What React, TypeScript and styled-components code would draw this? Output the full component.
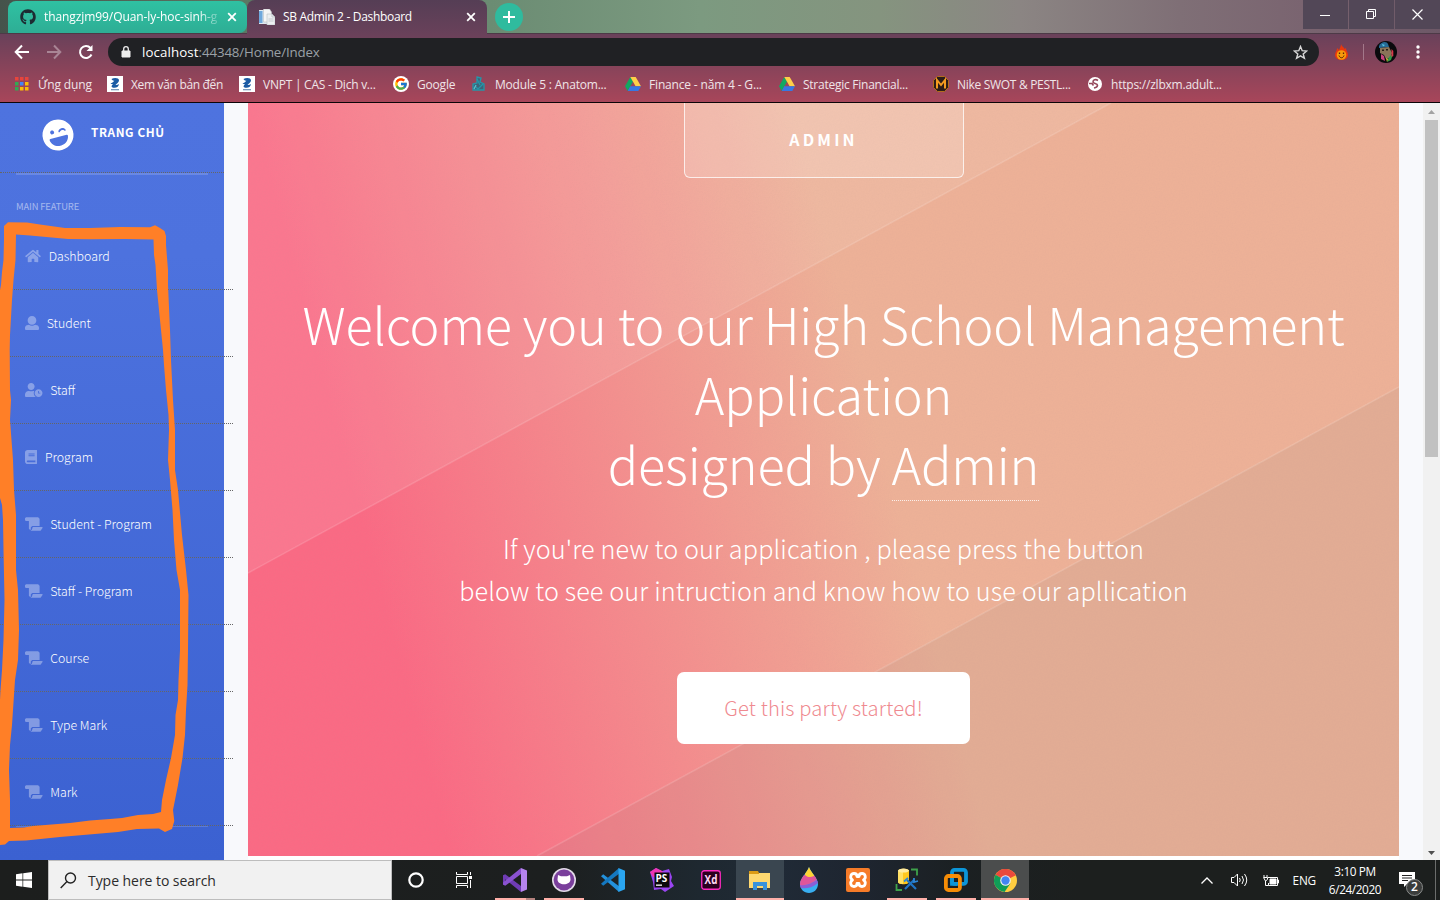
import React from "react";
import styled, { createGlobalStyle } from "styled-components";
import { FaGithub, FaHome, FaUserClock, FaBook, FaLaughWink } from "react-icons/fa";
import { FcGoogle } from "react-icons/fc";

const UI = `"Open Sans", "Noto Sans", sans-serif`;
const WEB = `"Noto Sans CJK JP", "Noto Sans CJK SC", "Noto Sans", sans-serif`;

const Global = createGlobalStyle`
  *, *::before, *::after { box-sizing: border-box; }
  body { margin: 0; overflow: hidden; background: #fff; }
  svg { display: block; flex: none; }
`;

const Screen = styled.div`
  width: 1440px;
  height: 900px;
  display: flex;
  flex-direction: column;
  overflow: hidden;
  font-family: ${UI};
`;

const Label = styled.span<{ $size?: number; $ls?: number; $color?: string }>`
  font-size: ${(p) => p.$size ?? 12}px;
  letter-spacing: ${(p) => p.$ls ?? 0}px;
  color: ${(p) => p.$color ?? "#fff"};
  white-space: nowrap;
`;

/* ---------- Browser chrome ---------- */

const Chrome = styled.header`
  height: 103px;
  flex: none;
  display: flex;
  flex-direction: column;
  background: linear-gradient(#553e55 0, #69415a 34px, #a8465a 102px);
  border-bottom: 1px solid #0b0508;
`;

const TabStrip = styled.div`
  height: 34px;
  display: flex;
  align-items: flex-start;
  background: linear-gradient(90deg, #45534b 0, #5b7763 247px, #6b8c73 490px, #7c9a80 700px, #85947f 880px, #8b8583 1020px, #7f6f76 1180px, #7a6470 1303px, #6d5867 1440px);
  border-bottom: 1px solid #4d3a47;
`;

const Tab = styled.div<{ $active?: boolean }>`
  height: ${(p) => (p.$active ? 34 : 32)}px;
  margin-top: ${(p) => (p.$active ? 0 : 1)}px;
  width: ${(p) => (p.$active ? 240 : 239)}px;
  margin-left: ${(p) => (p.$active ? 0 : 8)}px;
  padding: 0 ${(p) => (p.$active ? 11 : 10)}px 0 12px;
  display: flex;
  align-items: center;
  border-radius: ${(p) => (p.$active ? "8px 8px 0 0" : "8px 8px 8px 0")};
  background: ${(p) => (p.$active ? "linear-gradient(#553e55, #69415a)" : "linear-gradient(#2fc1a2, #2eae95)")};
`;

const TabTitle = styled(Label)<{ $fade?: boolean }>`
  flex: 1;
  margin: 0 8px;
  padding-bottom: 1px;
  ${(p) => p.$fade && "mask-image: linear-gradient(90deg, #000 88%, rgba(0, 0, 0, 0.2));"}
`;

const NewTab = styled.div`
  width: 28px;
  height: 28px;
  margin: 3px 0 0 8px;
  border-radius: 50%;
  background: #2fbb9e;
  display: grid;
  place-items: center;
`;

const WindowControls = styled.div`
  margin-left: auto;
  display: flex;
  gap: 1px;
`;

const WindowButton = styled.div`
  width: 45px;
  height: 29px;
  background: #524757;
  display: grid;
  place-items: center;
`;

const Toolbar = styled.div`
  height: 36px;
  display: flex;
  align-items: center;
  padding-left: 14px;
`;

const NavIcons = styled.div`
  width: 94px;
  display: flex;
  gap: 16px;
`;

const AddressBar = styled.div`
  width: 1211px;
  height: 28px;
  border-radius: 14px;
  background: #202124;
  display: flex;
  align-items: center;
  padding: 0 11px 0 13px;
`;

const Url = styled(Label)`
  flex: 1;
  margin-left: 11px;
`;

const HostText = styled.span`
  letter-spacing: 0.1px;
  color: #fff;
`;

const ExtensionSlot = styled.span`
  margin-left: 16px;
`;

const ToolbarRule = styled.div`
  width: 1px;
  height: 16px;
  margin: 0 11px 0 15px;
  background: #a3788a;
`;

const Avatar = styled.div`
  width: 22px;
  height: 22px;
  border-radius: 50%;
  overflow: hidden;
  margin-right: 17px;
`;

const Bookmarks = styled.nav`
  height: 28px;
  display: flex;
  align-items: center;
  padding-left: 14px;
`;

const Bookmark = styled.div<{ $w: number }>`
  width: ${(p) => p.$w}px;
  display: flex;
  align-items: center;
  gap: 8px;
`;

const Disc = styled.span<{ $on?: boolean }>`
  width: 16px;
  height: 16px;
  display: grid;
  place-items: center;
  ${(p) => p.$on && "background: #fff; border-radius: 50%; svg { width: 14px; height: 14px; }"}
`;

/* ---------- Page ---------- */

const Page = styled.div`
  height: 757px;
  flex: none;
  display: flex;
  background: #f8f9fc;
`;

const Sidebar = styled.aside`
  position: relative;
  width: 224px;
  height: 757px;
  background: linear-gradient(#4e73df 0, #4d72de 20%, #3b61d1 100%);
  font-family: ${WEB};
`;

const Brand = styled.div`
  height: 70px;
  padding: 0 0 5px 42px;
  display: flex;
  align-items: center;
  gap: 17px;
  border-bottom: 1px dotted #666;
  svg { transform: rotate(-15deg); }
`;

const BrandText = styled(Label)`
  font-weight: 700;
  padding-bottom: 8px;
`;

const Divider = styled.div<{ $h: number }>`
  height: ${(p) => p.$h}px;
  margin: 0 16px;
  background: rgba(255, 255, 255, 0.16);
`;

const SectionTitle = styled.div`
  height: 48px;
  padding: 24px 16px 0;
  font-size: 9.4px;
  line-height: 14px;
  letter-spacing: -0.13px;
  color: rgba(255, 255, 255, 0.5);
`;

const NavItem = styled.div`
  width: 233px;
  height: 67px;
  padding: 0 0 1px 25px;
  display: flex;
  align-items: center;
  gap: 7.7px;
  border-bottom: 1px dotted #666;
  svg { color: rgba(255, 255, 255, 0.35); }
`;

const NavGlyph = styled.span<{ $w: number }>`
  display: flex;
  svg { width: ${(p) => p.$w}px; height: 14px; }
`;

const NavText = styled(Label)`
  font-weight: 300;
`;

const Marker = styled.svg`
  position: absolute;
  left: 0;
  top: 117px;
  z-index: 2;
`;

const Main = styled.main`
  flex: 1;
  padding-left: 24px;
  display: flex;
`;

const HeroColumn = styled.div`
  width: 1151px;
  height: 757px;
  background: #fff;
`;

const Hero = styled.section`
  position: relative;
  width: 1151px;
  height: 753px;
  overflow: hidden;
  display: flex;
  flex-direction: column;
  align-items: center;
  text-align: center;
  font-family: ${WEB};
  font-weight: 200;
  color: #fff;
  background: linear-gradient(75deg, #fa6a84 15%, #edb197 55%);
  > * { position: relative; }
`;

const HeroShade = styled.svg`
  && { position: absolute; inset: 0; }
`;

const AdminBox = styled.div`
  width: 280px;
  height: 75px;
  flex: none;
  border: 1px solid rgba(255, 255, 255, 0.75);
  border-top: 0;
  border-radius: 0 0 6px 6px;
  background: rgba(255, 255, 255, 0.17);
  display: flex;
  justify-content: center;
  align-items: center;
  padding-bottom: 2px;
  font-weight: 700;
  font-size: 16px;
  letter-spacing: 3.2px;
`;

const Heading = styled.h1`
  margin: 111px 0 0;
  font-size: 50.4px;
  line-height: 70px;
  letter-spacing: -0.14px;
  font-weight: 200;
  white-space: nowrap;
`;

const HeadingLink = styled.span`
  display: inline-block;
  height: 72px;
  border-bottom: 1px dotted rgba(255, 255, 255, 0.8);
`;

const Lead = styled.p`
  margin: 26px 0 0;
  font-size: 25.2px;
  line-height: 42px;
  letter-spacing: 0.125px;
  font-weight: 200;
  white-space: nowrap;
`;

const StartButton = styled.div`
  width: 293px;
  height: 72px;
  margin-top: 61px;
  padding-bottom: 2px;
  border-radius: 7px;
  background: #fff;
  color: #ef8a90;
  font-size: 20.2px;
  letter-spacing: 0.17px;
  font-weight: 300;
  display: grid;
  place-items: center;
`;

const Scrollbar = styled.div`
  width: 17px;
  margin-left: auto;
  background: #f1f1f1;
  display: flex;
  flex-direction: column;
  align-items: center;
  padding: 7px 0 5px;
`;

const Thumb = styled.div`
  width: 13px;
  height: 337px;
  margin: 6px 0 auto;
  background: #c1c1c1;
`;

/* ---------- Taskbar ---------- */

const Taskbar = styled.footer`
  height: 40px;
  flex: none;
  display: flex;
  background: linear-gradient(90deg, #1c1e1d 0, #1c1f1f 560px, #1e2830 700px, #202a36 780px, #1e2530 860px, #1b2022 960px, #1c1f1e 1080px);
`;

const underline = {
  none: "transparent",
  mid: "#ffb0a9",
  full: "#ffb0a9",
  stacked: "linear-gradient(90deg, #ffb0a9 31px, #b5827e 31px)",
};

const TaskCell = styled.div<{ $hot?: string; $line?: keyof typeof underline }>`
  position: relative;
  width: 48px;
  height: 40px;
  margin-right: 1px;
  display: grid;
  place-items: center;
  background: ${(p) => p.$hot ?? "transparent"};
  &::after {
    content: "";
    position: absolute;
    bottom: 0;
    left: ${(p) => (p.$line === "full" ? 0 : 4)}px;
    right: ${(p) => (p.$line === "full" ? 0 : 4)}px;
    height: 2px;
    background: ${(p) => underline[p.$line ?? "none"]};
  }
`;

const Search = styled.div`
  width: 344px;
  height: 40px;
  border: 1px solid #bdbdbd;
  background: #f1f1f1;
  display: flex;
  align-items: center;
  padding-left: 11px;
  gap: 11px;
`;

const StartCell = styled(TaskCell)`
  margin-right: 0;
`;

const TaskList = styled.div`
  display: flex;
  margin-left: 3px;
`;

const Tray = styled.div`
  margin-left: auto;
  display: flex;
  align-items: center;
  height: 40px;
`;

const TrayIcon = styled.span<{ $mr: number }>`
  margin-right: ${(p) => p.$mr}px;
`;

const Clock = styled.div`
  width: 56px;
  margin: 0 16px 1px 11px;
  display: flex;
  flex-direction: column;
  align-items: center;
  line-height: 18px;
`;

const Notifications = styled.div`
  position: relative;
  width: 37px;
  height: 40px;
  padding-top: 12px;
  border-right: 1px solid #6b6d6c;
  margin-right: 4px;
`;

const Badge = styled.span`
  position: absolute;
  left: 7px;
  top: 19px;
  width: 17px;
  height: 17px;
  border-radius: 50%;
  border: 1px solid #8a8c8b;
  background: #3b3d3c;
  color: #fff;
  font-size: 12px;
  font-weight: 600;
  line-height: 14px;
  text-align: center;
`;

/* ---------- Drawings ---------- */

const CloseX = () => (
  <svg width="10" height="10" viewBox="0 0 10 10" stroke="#fff" strokeWidth="1.8"><path d="M1.200 1.200l7.600 7.600M8.800 1.200L1.200 8.800" /></svg>
);

const Docs = () => (
  <svg width="16" height="16" viewBox="0 0 16 16">
    <rect x="0" y="1" width="11" height="14" fill="#dfe9f1" /><rect x="0" y="2" width="3.5" height="12" fill="#6fa8dc" />
    <path d="M4.500 0h6l2 3v10h-8z" fill="#f5f5f5" stroke="#b8bfc4" strokeWidth=".6" />
    <path d="M8 5h5l3 3v8H8z" fill="#eceff1" stroke="#b8bfc4" strokeWidth=".6" /><path d="M13 5v3h3M9.500 10h5M9.500 12h5" stroke="#b4bcc0" strokeWidth=".7" fill="none" />
  </svg>
);

const Apps = () => (
  <svg width="14" height="14" viewBox="0 0 14 14">
    {["#e8453c", "#e8453c", "#e8453c", "#34a853", "#4285f4", "#fbbc05", "#34a853", "#fbbc05", "#fbbc05"].map((c, i) => (
      <rect key={i} x={(i % 3) * 5} y={Math.floor(i / 3) * 5} width="3.500" height="3.500" fill={c} />
    ))}
  </svg>
);

const Vnpt = () => (
  <svg width="16" height="16" viewBox="0 0 16 16">
    <rect width="16" height="16" fill="#fff" />
    <path d="M4.500 3C7 1.500 12 1.500 12 4.500c0 2-2.500 3-3.500 4.500 1.300.2 2.500-.3 3.500-1-.5 2.800-2.500 4-5 3.800C4 11.500 4 10 6 8c-1 .2-1.800 0-2.500-.5C5 7 7 5.500 7.500 4.500 6.500 5 5.300 4.500 4.500 3z" fill="#1b5ba4" />
    <path d="M4 13.700h8" stroke="#6d8fb5" strokeWidth="1.200" />
  </svg>
);

const Drive = () => (
  <svg width="16" height="14" viewBox="0 0 16 14">
    <path d="M5.300 0L0 9.300 2.700 14 8 4.600z" fill="#11a861" /><path d="M5.300 0h5.400L16 9.300h-5.400z" fill="#ffcf48" /><path d="M5.300 9.300H16L13.300 14H2.700z" fill="#3777e3" />
  </svg>
);

const Module = () => (
  <svg width="16" height="16" viewBox="0 0 16 16" fill="none" stroke="#2596a8" strokeWidth="1.300">
    <path d="M6 1l4 1-1 4 4 2v6H2V8l4-1z" fill="#3d6479" /><path d="M4 10l3 3 5-5M6 3l3 6" /><path d="M3 13l2-4" stroke="#57c3d0" />
  </svg>
);

const Medal = () => (
  <svg width="16" height="16" viewBox="0 0 16 16">
    <path d="M4.500.5h7L15.500 4.500v7L11.500 15.500h-7L.5 11.500v-7z" fill="#2c1d18" stroke="#b26c1d" />
    <path d="M4 12.500V4l4 5 4-5v8.500" fill="none" stroke="#f49b20" strokeWidth="2" />
  </svg>
);

const Globe = () => (
  <svg width="14" height="14" viewBox="0 0 14 14">
    <circle cx="7" cy="7" r="7" fill="#fff" />
    <path d="M10 3.500C7.500 1.800 5 3 5 5c0 1.800 4.500 1 4.500 3.200 0 1.500-1.500 2.300-3.500 2.800M1 6.500h3l1.500 2" fill="none" stroke="#96485b" strokeWidth="1.600" />
  </svg>
);

const Flame = () => (
  <svg width="13" height="16" viewBox="0 0 13 16">
    <path d="M6 0c1 3 3 3 3.500 5L11 4c0 3 2 4 2 7 0 3-3 5-6.500 5S0 14 0 11c0-3 2-4 2-7l2 2c1-2 2-4 2-6z" fill="#e8380d" />
    <circle cx="6.500" cy="11" r="4.800" fill="#f79a0b" /><path d="M4 11.500c1 3 4 3 5 0" stroke="#5a2205" fill="none" /><path d="M4.500 8.500v1.500M8.500 8.500v1.500" stroke="#5a2205" strokeWidth="1.300" />
  </svg>
);

const AvatarArt = () => (
  <svg width="22" height="22" viewBox="0 0 22 22">
    <rect width="22" height="22" fill="#0b0a0d" /><path d="M4 5c2-5 8-5 9-2l1 3-10 1z" fill="#276a96" /><path d="M7 3l3 1-2 1.500z" fill="#57c9e6" />
    <path d="M5 7l9-1 3 6-2 5-4 1-2-4-4-2z" fill="#8a7458" /><path d="M7 8.500h2V10H7zM11 8h2v1.500h-2z" fill="#2b1f19" /><path d="M6 13l3 2 1 5-4-2z" fill="#c9427d" />
    <path d="M14 16l4-3-2 6-4 2z" fill="#2e9a48" /><path d="M16.500 8l1.800 2v5l-1.800 1z" fill="#d83a4a" /><path d="M11 17l2 1-1 3z" fill="#e7c83a" />
  </svg>
);

const UserIcon = () => (
  <svg width="14" height="14" viewBox="0 0 512 512" fill="currentColor">
    <path d="M256 0c88.366 0 160 71.634 160 160S344.366 320 256 320 96 248.366 96 160 167.634 0 256 0zm183.283 333.821l-71.313-17.828c-74.923 53.890-165.738 41.864-223.940 0l-71.313 17.828C29.981 344.505 0 382.903 0 426.955V464c0 26.510 21.490 48 48 48h416c26.510 0 48-21.490 48-48v-37.045c0-44.052-29.981-82.450-72.717-93.134z" />
  </svg>
);

const ScrollIcon = () => (
  <svg width="18" height="14" viewBox="0 0 18 14" fill="currentColor">
    <path d="M1 0h12.500L15 1.500V9H7.500L6 10.300V13H5L4 11.800V4H.7L0 3V1z" /><path d="M8 10h10v1.200L16 14H5.500l1.500-1z" />
  </svg>
);

const VisualStudio = () => (
  <svg width="24" height="24" viewBox="0 0 24 24">
    <path d="M0 7.200L2.200 6.200 18 18v6L0 9.500zM0 7.200h2.200v10L0 16.500z" fill="#6f3cb4" />
    <path d="M0 16.500l2.200 1.200L18 6V0L0 14.500z" fill="#8a52d0" /><path d="M18 0l6 2.600v18.800L18 24z" fill="#b583ee" />
  </svg>
);

const GithubDesktop = () => (
  <svg width="24" height="24" viewBox="0 0 24 24">
    <circle cx="12" cy="12" r="12" fill="#e3dbe8" /><circle cx="12" cy="12" r="10.400" fill="#7a3f9c" />
    <path d="M6 7l3 1.200h6L18 7l.5 4.500c0 6.300-13 6.300-13 0z" fill="#fff" />
  </svg>
);

const VsCode = () => (
  <svg width="24" height="24" viewBox="0 0 24 24">
    <path d="M0 8.200l2.200-2L18 18.300V24z" fill="#2391dc" /><path d="M0 15.800l2.200 2L18 5.700V0z" fill="#1478c0" /><path d="M17.500 0L24 2.800v18.400L17.500 24z" fill="#2aa5f0" />
  </svg>
);

const PhpStorm = () => (
  <svg width="24" height="24" viewBox="0 0 24 24">
    <path d="M0 4l6-4 6 3 7-2 3 8-1 4 3 5-9 6-4-3-7 1-1-8z" fill="#9a45f2" /><path d="M0 4l6-4 6 3 3 6H3z" fill="#ee35b4" />
    <rect x="4.500" y="4.500" width="15" height="15" fill="#0a0a0a" /><rect x="6" y="16.500" width="6" height="1.300" fill="#fff" />
    <text x="5.500" y="13.500" fontFamily="Open Sans" fontWeight="700" fontSize="10" fill="#fff">PS</text>
  </svg>
);

const Xd = () => (
  <svg width="20" height="20" viewBox="0 0 20 20">
    <rect x=".75" y=".75" width="18.500" height="18.500" rx="2.500" fill="#2b001e" stroke="#ff2bc2" strokeWidth="1.300" />
    <text x="3.600" y="14.300" fontFamily="Open Sans" fontWeight="700" fontSize="12" textLength="12.800" lengthAdjust="spacingAndGlyphs" fill="#ffd9f4">Xd</text>
  </svg>
);

const Explorer = () => (
  <svg width="22" height="20" viewBox="0 0 22 20">
    <path d="M0 3h21v15H0z" fill="#ffd970" /><path d="M0 4V1h9l1 2v1z" fill="#dd9c15" /><path d="M4 20v-8h14v8h-4v-4H8v4z" fill="#3a93dc" />
  </svg>
);

const Drop = () => (
  <svg width="18" height="26" viewBox="0 0 18 26">
    <defs><clipPath id="drop"><path d="M9 0c2 6 9 11 9 17 0 5-4 9-9 9s-9-4-9-9C0 11 7 6 9 0z" /></clipPath></defs>
    <g clipPath="url(#drop)"><rect width="18" height="26" fill="#38aef0" /><path d="M0 17c6 2 12-1 18-5v4c-6 5-12 6-18 5z" fill="#8b5ed6" /><path d="M0 18V8h18v4c-6 4-12 7-18 6z" fill="#e0559a" /><path d="M4 0h10v9c-4 2-7 1-9-1z" fill="#ffd335" /></g>
  </svg>
);

const Xampp = () => (
  <svg width="24" height="24" viewBox="0 0 24 24">
    <rect width="24" height="24" rx="2" fill="#f67b28" />
    <path
      d="M8 5.500C10 5.500 11 6.800 11 8.500H13C13 6.800 14 5.500 16 5.500 19.500 5.500 20.500 10 17.500 12 20.500 14 19.500 18.500 16 18.500 14 18.500 13 17.200 13 15.500H11C11 17.200 10 18.500 8 18.500 4.500 18.500 3.500 14 6.500 12 3.500 10 4.500 5.500 8 5.500z"
      fill="none" stroke="#fff" strokeWidth="2.800" strokeLinejoin="round"
    />
  </svg>
);

const Ssms = () => (
  <svg width="24" height="24" viewBox="0 0 24 24">
    <path d="M3 3c0-3 11-3 11 0v11c0 3-11 3-11 0z" fill="#ffc81e" /><path d="M3 3h5v13c-3 0-5-1-5-2z" fill="#ffe063" /><ellipse cx="8.500" cy="2.600" rx="5.500" ry="2" fill="#ffeca0" />
    <path d="M16 1.500h6v6M1.500 16v6H7" stroke="#3fa24b" strokeWidth="1.800" fill="none" /><path d="M10 21l9-9M12 12l9 9" stroke="#1f74c4" strokeWidth="2.200" />
    <path d="M9 13.500l4-3.500M19 10v4l4-1" stroke="#2d86d6" strokeWidth="1.800" fill="none" />
  </svg>
);

const Vmware = () => (
  <svg width="24" height="24" viewBox="0 0 24 24" fill="none" strokeWidth="3.800">
    <rect x="8" y="1.900" width="14" height="14" rx="2.500" stroke="#0c95d8" /><rect x="1.900" y="8" width="14" height="14" rx="2.500" stroke="#f78d06" /><path d="M8 10v5.900h5" stroke="#0c95d8" />
  </svg>
);

const ChromeLogo = () => (
  <svg width="23" height="23" viewBox="0 0 48 48">
    <circle cx="24" cy="24" r="24" fill="#ffcd40" /><path d="M24 24L3.200 12A24 24 0 0 1 45.500 13z" fill="#ea4a3d" /><path d="M3.200 12A24 24 0 0 0 22 48l12-18-10-6z" fill="#109d58" />
    <path d="M24 13h21.500L42 12H24z" fill="#ea4a3d" /><circle cx="24" cy="24" r="11" fill="#f1f1f1" /><circle cx="24" cy="24" r="8.700" fill="#4285f4" />
  </svg>
);

const markerPath =
  "M4 226L8 222.300 27 222.600 40 224.500 65 228 90 228 120 227 150 227.300 155 225.200 160 228 164.500 231 166 236 166 245 168 270 168 285 170 330 171 360 173 400 175 430 175 470 178 490 182 535 186 570 188.500 595 188 650 187.500 685 186 710 185 735 182.500 758 178 785 173 810 174.300 821 172 829 165 832 159 828.600 137 829 118 832 60 837 26 840.500 9 841 5 844.500 0 845V290L1 285 2 272 3.500 260 4 240z" +
  "M10 828L24 827.500 33 826 70 823 90 820.500 110 819 122 818 138 815 153 814 161 812 162 800 166 780 171 758 175 735 175.500 715 178 700 178.500 680 180 650 180 610 180 590 176.500 570 174 540 172.500 510 170 480 168 460 169 430 168.500 415 166 390 164 365 163 350 159 310 157 290 155.500 265 154 255 153.500 239.500 125 239 90 239.300 68 239 30 235.500 16 234.500 15.500 260 13.500 280 12 300 10 335 9.700 350 10 390 11 400 10 420 11.500 440 13 460 14 490 16 515 16 570 18 590 19 630 18 660 15 680 13 710 12 725 10 745 9 770 10 800z" +
  "M0 498L2 505 3 520 3.500 550 4.500 600 3.500 640 2 670 .5 690 0 700z";

/* ---------- Content ---------- */

const bookmarks = [
  { w: 93, icon: <Apps />, text: "Ứng dụng", ls: -0.1 },
  { w: 132, icon: <Vnpt />, text: "Xem văn bản đến", ls: -0.33 },
  { w: 154, icon: <Vnpt />, text: "VNPT | CAS - Dịch v...", ls: -0.25 },
  { w: 78, icon: <FcGoogle size={16} />, text: "Google", ls: -0.2, disc: true },
  { w: 154, icon: <Module />, text: "Module 5 : Anatom...", ls: -0.2 },
  { w: 154, icon: <Drive />, text: "Finance - năm 4 - G...", ls: -0.17 },
  { w: 154, icon: <Drive />, text: "Strategic Financial...", ls: -0.25 },
  { w: 154, icon: <Medal />, text: "Nike SWOT & PESTL...", ls: -0.3 },
  { w: 150, icon: <Globe />, text: "https://zlbxm.adult...", ls: -0.22 },
];

const navItems = [
  { w: 16, icon: <FaHome />, text: "Dashboard" },
  { w: 14, icon: <UserIcon />, text: "Student" },
  { w: 17.5, icon: <FaUserClock />, text: "Staff" },
  { w: 12.25, icon: <FaBook />, text: "Program" },
  { w: 17.5, icon: <ScrollIcon />, text: "Student - Program" },
  { w: 17.5, icon: <ScrollIcon />, text: "Staff - Program" },
  { w: 17.5, icon: <ScrollIcon />, text: "Course" },
  { w: 17.5, icon: <ScrollIcon />, text: "Type Mark" },
  { w: 17.5, icon: <ScrollIcon />, text: "Mark" },
];

const tasks: { icon: React.ReactNode; hot?: string; line?: keyof typeof underline }[] = [
  { icon: <VisualStudio />, line: "stacked" },
  { icon: <GithubDesktop />, line: "mid" },
  { icon: <VsCode /> },
  { icon: <PhpStorm /> },
  { icon: <Xd /> },
  { icon: <Explorer />, hot: "#3a4650", line: "full" },
  { icon: <Drop /> },
  { icon: <Xampp /> },
  { icon: <Ssms />, line: "mid" },
  { icon: <Vmware />, line: "mid" },
  { icon: <ChromeLogo />, hot: "#4b4d4d", line: "full" },
];

export default function App() {
  return (
    <Screen>
      <Global />
      <Chrome>
        <TabStrip>
          <Tab>
            <FaGithub size={16} color="#1d2b33" />
            <TabTitle $fade $ls={-0.08}>thangzjm99/Quan-ly-hoc-sinh-g</TabTitle>
            <CloseX />
          </Tab>
          <Tab $active>
            <Docs />
            <TabTitle $ls={-0.32}>SB Admin 2 - Dashboard</TabTitle>
            <CloseX />
          </Tab>
          <NewTab>
            <svg width="12" height="12" viewBox="0 0 12 12" stroke="#fff" strokeWidth="2"><path d="M6 0v12M0 6h12" /></svg>
          </NewTab>
          <WindowControls>
            <WindowButton><svg width="12" height="10" stroke="#fff"><path d="M0 5.500h10" /></svg></WindowButton>
            <WindowButton>
              <svg width="11" height="11" stroke="#fff" fill="none"><path d="M.5 2.500h7v7h-7zM2.500 2.500v-2h7v7h-2" /></svg>
            </WindowButton>
            <WindowButton><svg width="11" height="11" stroke="#fff" strokeWidth="1.200"><path d="M.5.5l10 10M10.500.5l-10 10" /></svg></WindowButton>
          </WindowControls>
        </TabStrip>
        <Toolbar>
          <NavIcons>
            <svg width="16" height="16" viewBox="0 0 16 16" fill="none" stroke="#fff" strokeWidth="2"><path d="M15 8H2M8 1.500L1.700 8 8 14.500" /></svg>
            <svg width="16" height="16" viewBox="0 0 16 16" fill="none" stroke="#a98595" strokeWidth="2"><path d="M1 8h13M8 1.500L14.300 8 8 14.500" /></svg>
            <svg width="16" height="16" viewBox="0 0 16 16" fill="none" stroke="#fff" strokeWidth="2">
              <path d="M13.500 10.500A6 6 0 1 1 12.500 4" /><path d="M14.500 1v6h-6z" fill="#fff" stroke="none" />
            </svg>
          </NavIcons>
          <AddressBar>
            <svg width="10" height="12" viewBox="0 0 10 12"><path d="M1 5h8v6H1z" fill="#eee" stroke="#eee" /><path d="M2.700 5V3a2.300 2.300 0 0 1 4.600 0v2" fill="none" stroke="#eee" strokeWidth="1.300" /></svg>
            <Url $size={13.3} $ls={-0.13} $color="#9aa0a6"><HostText>localhost</HostText>:44348/Home/Index</Url>
            <svg width="15" height="15" viewBox="0 0 15 15" fill="none" stroke="#d8d8d8" strokeWidth="1.400"><path d="M7.500 1.500l1.700 4.200 4.500.3-3.500 2.900 1.200 4.400-3.900-2.500-3.900 2.500 1.200-4.400L1.300 6l4.500-.3z" /></svg>
          </AddressBar>
          <ExtensionSlot><Flame /></ExtensionSlot>
          <ToolbarRule />
          <Avatar><AvatarArt /></Avatar>
          <svg width="8" height="14" viewBox="0 0 8 14" fill="#fff"><circle cx="4" cy="2" r="1.700" /><circle cx="4" cy="7" r="1.700" /><circle cx="4" cy="12" r="1.700" /></svg>
        </Toolbar>
        <Bookmarks>
          {bookmarks.map((b) => (
            <Bookmark key={b.text} $w={b.w}>
              <Disc $on={b.disc}>{b.icon}</Disc>
              <Label $size={12} $ls={b.ls} $color="#f0e4e8">{b.text}</Label>
            </Bookmark>
          ))}
        </Bookmarks>
      </Chrome>

      <Page>
        <Sidebar>
          <Brand>
            <FaLaughWink size={32} color="#fff" />
            <BrandText $size={11.8} $ls={0.6}>TRANG CHỦ</BrandText>
          </Brand>
          <Divider $h={2} />
          <SectionTitle>MAIN FEATURE</SectionTitle>
          {navItems.map((n) => (
            <NavItem key={n.text}>
              <NavGlyph $w={n.w}>{n.icon}</NavGlyph>
              <NavText $size={12.35}>{n.text}</NavText>
            </NavItem>
          ))}
          <Divider $h={1} />
          <Marker width="192" height="630" viewBox="0 220 192 630" fill="#ff7f27" fillRule="evenodd"><path d={markerPath} /></Marker>
        </Sidebar>
        <Main>
          <HeroColumn>
            <Hero>
              <HeroShade width="1151" height="753" viewBox="0 0 1151 753">
                <defs>
                  <filter id="grain"><feTurbulence type="fractalNoise" baseFrequency=".7" numOctaves="2" /><feColorMatrix values="0 0 0 0 .5  0 0 0 0 .3  0 0 0 0 .3  .6 0 0 0 -.2" /></filter>
                </defs>
                <path d="M0 0H863L0 470z" fill="#fff" opacity=".09" />
                <path d="M1151 284V753H289z" fill="#8a8a80" opacity=".11" />
                <path d="M863 0L0 470M1151 284L289 753" stroke="#fff" strokeWidth="1.500" opacity=".14" />
                <rect width="1151" height="753" filter="url(#grain)" opacity=".2" />
              </HeroShade>
              <AdminBox>ADMIN</AdminBox>
              <Heading>
                Welcome you to our High School Management<br />Application<br />designed by <HeadingLink>Admin</HeadingLink>
              </Heading>
              <Lead>If you're new to our application , please press the button<br />below to see our intruction and know how to use our apllication</Lead>
              <StartButton>Get this party started!</StartButton>
            </Hero>
          </HeroColumn>
          <Scrollbar>
            <svg width="7" height="4"><path d="M0 4L3.500 0 7 4z" fill="#a3a3a3" /></svg>
            <Thumb />
            <svg width="7" height="4"><path d="M0 0h7L3.500 4z" fill="#505050" /></svg>
          </Scrollbar>
        </Main>
      </Page>

      <Taskbar>
        <StartCell>
          <svg width="16" height="16" viewBox="0 0 16 16" fill="#fff"><path d="M0 2.200L6.500 1.300V7.600H0zM7.200 1.200L16 0V7.600H7.200zM0 8.400H6.500V14.700L0 13.800zM7.200 8.400H16V16L7.200 14.800z" /></svg>
        </StartCell>
        <Search>
          <svg width="17" height="17" viewBox="0 0 17 17" fill="none" stroke="#222" strokeWidth="1.400"><circle cx="10.500" cy="6" r="5" /><path d="M7 9.500L.7 16" /></svg>
          <Label $size={14} $ls={-0.05} $color="#2b2b2b">Type here to search</Label>
        </Search>
        <StartCell><svg width="16" height="16"><circle cx="8" cy="8" r="6.700" fill="none" stroke="#fff" strokeWidth="2.200" /></svg></StartCell>
        <StartCell>
          <svg width="17" height="16" fill="none" stroke="#fff"><path d="M.5 0v2.500h11V0M.5 16v-2.500h11V16M.5 4.500h11v7H.5zM14.500 0v3M14.500 8v8" /><path d="M13 4h3v3h-3z" fill="#fff" stroke="none" /></svg>
        </StartCell>
        <TaskList>
          {tasks.map((t, i) => (
            <TaskCell key={i} $hot={t.hot} $line={t.line}>{t.icon}</TaskCell>
          ))}
        </TaskList>
        <Tray>
          <TrayIcon $mr={18}><svg width="12" height="7" fill="none" stroke="#fff" strokeWidth="1.300"><path d="M.5 6.500L6 1l5.500 5.500" /></svg></TrayIcon>
          <TrayIcon $mr={15}>
            <svg width="17" height="14" fill="none" stroke="#fff"><path d="M.5 4.500h2.500L6.500 1v12L3 9.500H.5zM8.500 5q1.500 2 0 4M11 3q3 4 0 8M13.500 1q4.500 6 0 12" /></svg>
          </TrayIcon>
          <TrayIcon $mr={14}>
            <svg width="16" height="13" fill="none" stroke="#fff"><path d="M5 3.500h9.500v8h-9V9M14.500 6h1v3h-1" /><path d="M7 5h6v5H7z" fill="#fff" /><path d="M1 1v2M4 1v2M.5 3.500h4v2l-2 1.500zM2.500 7v4.500h3" /></svg>
          </TrayIcon>
          <Label $size={11.8} $ls={-0.2}>ENG</Label>
          <Clock>
            <Label $size={11.8} $ls={-0.4}>3:10 PM</Label>
            <Label $size={11.8} $ls={-0.4}>6/24/2020</Label>
          </Clock>
          <Notifications>
            <svg width="16" height="16"><path d="M0 0h16v12H8l-3 3v-3H0z" fill="#fff" /><path d="M3 3.500h10M3 6h10M3 8.500h6" stroke="#222" /></svg>
            <Badge>2</Badge>
          </Notifications>
        </Tray>
      </Taskbar>
    </Screen>
  );
}
